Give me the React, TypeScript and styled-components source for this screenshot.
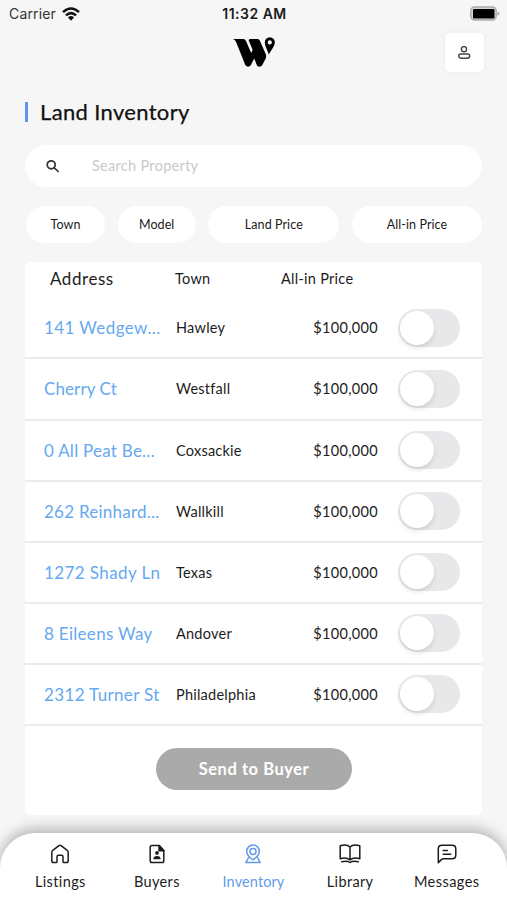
import React from "react";
import styled, { createGlobalStyle } from "styled-components";

const GlobalStyle = createGlobalStyle`
  * { box-sizing: border-box; }
  body {
    margin: 0;
    background: #f6f6f6;
    color: #1c1c1c;
    font-family: Lato, "Open Sans", sans-serif;
  }
  button { font: inherit; color: inherit; border: 0; padding: 0; }
`;

const Screen = styled.div`
  width: 507px;
  height: 900px;
  display: flex;
  flex-direction: column;
  overflow: hidden;
  background: #f6f6f6;
`;

const StatusBar = styled.div`
  height: 28px;
  flex: none;
  display: grid;
  grid-template-columns: 1fr auto 1fr;
  align-items: center;
  padding: 0 7px 1px 9px;
  font-family: Inter, sans-serif;
  font-size: 14px;
  color: #333;
  svg { display: block; }
`;

const Carrier = styled.div`
  display: flex;
  align-items: center;
  gap: 6px;
  letter-spacing: 0.15px;
`;

const Clock = styled.div`
  font-weight: 600;
  font-size: 14px;
  letter-spacing: 0.5px;
  color: #1a1a1a;
`;

const Battery = styled.div`
  justify-self: end;
`;

const Header = styled.header`
  height: 54px;
  flex: none;
  display: grid;
  grid-template-columns: 1fr 42px 1fr;
  padding: 5px 23px 0 24px;
  svg { display: block; }
`;

const Logo = styled.div`
  grid-column: 2;
  padding-top: 4px;
`;

const ProfileButton = styled.button`
  justify-self: end;
  width: 39px;
  height: 39px;
  border-radius: 5px;
  background: #fff;
  box-shadow: 0 0 6px rgba(0, 0, 0, 0.05);
  display: grid;
  place-items: center;
`;

const Title = styled.h1`
  height: 20px;
  flex: none;
  margin: 20px 0 0 25px;
  padding-left: 12px;
  border-left: 3px solid #5c98e6;
  font-size: 22px;
  font-weight: 400;
  line-height: 20px;
  letter-spacing: 0.34px;
  color: #111;
  -webkit-text-stroke: 0.25px #111;
`;

const Search = styled.label`
  height: 42px;
  flex: none;
  margin: 23px 25px 0;
  padding-left: 21px;
  border-radius: 21px;
  background: #fff;
  display: flex;
  align-items: center;
  gap: 33px;
`;

const SearchInput = styled.input`
  flex: 1;
  border: 0;
  outline: 0;
  padding: 0 0 2px;
  background: transparent;
  font: 14.5px Lato, sans-serif;
  letter-spacing: 0.3px;
  &::placeholder { color: #c9c9c9; opacity: 1; }
`;

const Filters = styled.div`
  height: 37px;
  flex: none;
  margin: 19px 25px 0 26px;
  display: grid;
  grid-template-columns: 79px 78px 131px 130px;
  justify-content: space-between;
`;

const Chip = styled.button`
  border-radius: 19px;
  background: #fff;
  font-size: 12.5px;
  letter-spacing: 0.08px;
`;

const Card = styled.main`
  height: 553px;
  flex: none;
  margin: 19px 25px 0;
  border-radius: 5px;
  background: #fff;
`;

const HeadRow = styled.div`
  height: 36.4px;
  display: grid;
  grid-template-columns: 125px 106px 1fr;
  align-items: center;
  padding: 0 0 2.5px 25px;
  font-size: 14.5px;
`;

const AddressHead = styled.span`
  font-size: 17px;
  letter-spacing: 0.55px;
`;

const HeadCell = styled.span`
  letter-spacing: 0.27px;
`;

const Row = styled.div`
  height: 61.07px;
  display: grid;
  grid-template-columns: 132px 110px 92px 62px;
  align-items: center;
  padding-left: 19px;
  border-bottom: 2px solid #ebebeb;
  font-size: 14.5px;
`;

const Address = styled.a<{ $spacing: number }>`
  font-size: 17px;
  color: #65a9f0;
  white-space: nowrap;
  letter-spacing: ${(p) => p.$spacing}px;
`;

const Town = styled.span`
  letter-spacing: 0.24px;
`;

const Price = styled.span`
  justify-self: end;
  letter-spacing: 0.32px;
`;

const Switch = styled.button`
  width: 62px;
  height: 38px;
  margin-left: 20px;
  padding: 2px;
  border-radius: 19px;
  background: #e8e8ea;
  display: flex;
`;

const Knob = styled.span`
  width: 34px;
  height: 34px;
  border-radius: 50%;
  background: #fff;
  box-shadow: 0 3px 5px rgba(0, 0, 0, 0.1);
`;

const SendButton = styled.button`
  display: block;
  width: 196px;
  height: 42px;
  margin: 22.5px 0 0 131px;
  padding-bottom: 1px;
  border-radius: 21px;
  background: #aaa;
  color: #fff;
  font-size: 16.5px;
  font-weight: 700;
  letter-spacing: 0.55px;
`;

const TabBar = styled.nav`
  height: 67px;
  flex: none;
  margin-top: 18px;
  padding: 0 12px;
  border-radius: 35px 35px 0 0;
  background: #fff;
  box-shadow: 0 -4px 14px rgba(0, 0, 0, 0.28);
  display: grid;
  grid-template-columns: repeat(5, 1fr);
`;

const Tab = styled.a<{ $active?: boolean; $spacing: number }>`
  display: flex;
  flex-direction: column;
  align-items: center;
  padding-top: 11px;
  gap: 9px;
  font-size: 14.5px;
  line-height: 17px;
  letter-spacing: ${(p) => p.$spacing}px;
  color: ${(p) => (p.$active ? "#649be8" : "#1c1c1c")};
`;

const line = {
  fill: "none",
  stroke: "currentColor",
  strokeWidth: 1.5,
  strokeLinecap: "round" as const,
  strokeLinejoin: "round" as const,
};

const WifiIcon = () => (
  <svg width="18" height="14" viewBox="0 0 18 14" fill="none" stroke="#111" strokeWidth="2.5">
    <path d="M1 5.2Q9-2.2 17 5.2" />
    <path d="M3.9 8.4Q9 3.9 14.1 8.4" />
    <path d="M6 10.4Q9 7.8 12 10.4L9 13.7Z" fill="#111" stroke="none" />
  </svg>
);

const BatteryIcon = () => (
  <svg width="30" height="16" viewBox="0 0 30 16">
    <rect x="0.8" y="1" width="25.4" height="13" rx="3.8" fill="#d6d6d6" stroke="#aaa" strokeWidth="1.4" />
    <rect x="3" y="3" width="21.5" height="9.4" rx="1.2" fill="#000" />
    <path d="M27.5 5.2Q31.5 7.5 27.5 9.8Z" fill="#aaa" />
  </svg>
);

const LogoIcon = () => (
  <svg width="42" height="32" viewBox="0 0 42 32">
    <path d="M0.2 2H10.2Q12.2 2 13 4L18.2 16L19.6 12.8L16 4.3Q15.2 2 17.2 2H24.6Q26.2 2 26.9 3.8L32.9 17.6Q33.6 19.6 32.7 21.4L29.2 28.3Q26.6 31 24 28.5L21.2 21.4L17.8 28.3Q15 31 12.4 28.3L3.3 5.6Q2.6 3.2 0.2 2Z" />
    <path fillRule="evenodd" d="M36.8.3A5 5 0 0 1 41.8 5.5C41.8 9 38.5 12.5 35.8 17.6C34.3 12.6 31.8 9.2 31.8 5.5A5 5 0 0 1 36.8.3ZM36.8 3.3A2.1 2.1 0 1 0 36.8 7.5A2.1 2.1 0 1 0 36.8 3.3Z" />
  </svg>
);

const UserIcon = () => (
  <svg width="13" height="14" viewBox="0 0 13 14" {...line} stroke="#444" strokeWidth="1.4">
    <circle cx="6" cy="3.2" r="2.6" />
    <rect x="0.7" y="8" width="11" height="4.2" rx="2.1" />
  </svg>
);

const SearchIcon = () => (
  <svg width="13" height="13" viewBox="0 0 13 13" {...line} stroke="#333" strokeWidth="1.7">
    <circle cx="5.2" cy="4.8" r="4" />
    <path d="M8.3 7.9L12.2 11.5" />
  </svg>
);

const HomeIcon = () => (
  <svg width="20" height="20" viewBox="0 0 20 20" {...line}>
    <path d="M1.8 8.5Q1.8 7.2 2.8 6.3L8.6 1.8Q10 .8 11.4 1.8L17.2 6.3Q18.2 7.2 18.2 8.5V16.8Q18.2 18.6 16.4 18.6H13.8Q13 18.6 13 17.8V12.8Q13 11.3 11.5 11.3H8.5Q7 11.3 7 12.8V17.8Q7 18.6 6.2 18.6H3.6Q1.8 18.6 1.8 16.8Z" />
  </svg>
);

const BuyerIcon = () => (
  <svg width="20" height="20" viewBox="0 0 20 20" {...line}>
    <path d="M12.3 1.5H5Q3.2 1.5 3.2 3.3V16.7Q3.2 18.5 5 18.5H15Q16.8 18.5 16.8 16.7V6.5Z" />
    <path d="M12 1.5V6.8H16.8Z" fill="currentColor" />
    <circle cx="10" cy="8.9" r="1.9" fill="currentColor" stroke="none" />
    <path d="M6.3 15.3Q6.3 11.9 10 11.9T13.7 15.3Z" fill="currentColor" stroke="none" />
  </svg>
);

const PinIcon = () => (
  <svg width="20" height="20" viewBox="0 0 20 20" {...line}>
    <path d="M10 15.8Q3.7 11.8 3.7 7.3A6.3 6.3 0 0 1 16.3 7.3Q16.3 11.8 10 15.8Z" />
    <circle cx="10" cy="7.4" r="3" />
    <path d="M5.4 13.9L2.8 18.6H17.2L14.6 13.9" />
  </svg>
);

const BookIcon = () => (
  <svg width="22" height="20" viewBox="0 0 22 20" {...line}>
    <path d="M11 3Q8-.1 1.2 1.7V14.7Q7.5 13 11 15.8Q14.5 13 20.8 14.7V1.7Q14-.1 11 3V15.6" />
    <path d="M2.8 17.7Q8 16.3 11 18.5Q14 16.3 19.2 17.7" />
  </svg>
);

const MessageIcon = () => (
  <svg width="20" height="20" viewBox="0 0 20 20" {...line}>
    <path d="M1.3 18.6V5Q1.3 1.3 5 1.3H15Q18.8 1.3 18.8 5V11Q18.8 14.8 15 14.8H6.2Q5.1 14.8 4.3 15.6Z" />
    <path d="M6.2 6.6H10.4M6.2 10.2H13.7" />
  </svg>
);

const properties = [
  { address: "141 Wedgew...", spacing: 0.4, town: "Hawley" },
  { address: "Cherry Ct", spacing: 0.1, town: "Westfall" },
  { address: "0 All Peat Be...", spacing: 0.25, town: "Coxsackie" },
  { address: "262 Reinhard...", spacing: 0.24, town: "Wallkill" },
  { address: "1272 Shady Ln", spacing: 0.4, town: "Texas" },
  { address: "8 Eileens Way", spacing: 0.3, town: "Andover" },
  { address: "2312 Turner St", spacing: 0.35, town: "Philadelphia" },
];

const tabs = [
  { label: "Listings", Icon: HomeIcon, spacing: 0.38 },
  { label: "Buyers", Icon: BuyerIcon, spacing: 0.35 },
  { label: "Inventory", Icon: PinIcon, spacing: 0.1, active: true },
  { label: "Library", Icon: BookIcon, spacing: 0.35 },
  { label: "Messages", Icon: MessageIcon, spacing: 0.45 },
];

export default function App() {
  return (
    <Screen>
      <GlobalStyle />
      <StatusBar>
        <Carrier>Carrier <WifiIcon /></Carrier>
        <Clock>11:32 AM</Clock>
        <Battery><BatteryIcon /></Battery>
      </StatusBar>
      <Header>
        <Logo><LogoIcon /></Logo>
        <ProfileButton aria-label="Profile"><UserIcon /></ProfileButton>
      </Header>
      <Title>Land Inventory</Title>
      <Search>
        <SearchIcon />
        <SearchInput placeholder="Search Property" />
      </Search>
      <Filters>
        {["Town", "Model", "Land Price", "All-in Price"].map((f) => <Chip key={f}>{f}</Chip>)}
      </Filters>
      <Card>
        <HeadRow>
          <AddressHead>Address</AddressHead>
          <HeadCell>Town</HeadCell>
          <HeadCell>All-in Price</HeadCell>
        </HeadRow>
        {properties.map((p) => (
          <Row key={p.address}>
            <Address $spacing={p.spacing}>{p.address}</Address>
            <Town>{p.town}</Town>
            <Price>$100,000</Price>
            <Switch role="switch" aria-checked={false} aria-label={p.address}><Knob /></Switch>
          </Row>
        ))}
        <SendButton>Send to Buyer</SendButton>
      </Card>
      <TabBar>
        {tabs.map(({ label, Icon, spacing, active }) => (
          <Tab key={label} $active={active} $spacing={spacing}><Icon />{label}</Tab>
        ))}
      </TabBar>
    </Screen>
  );
}
